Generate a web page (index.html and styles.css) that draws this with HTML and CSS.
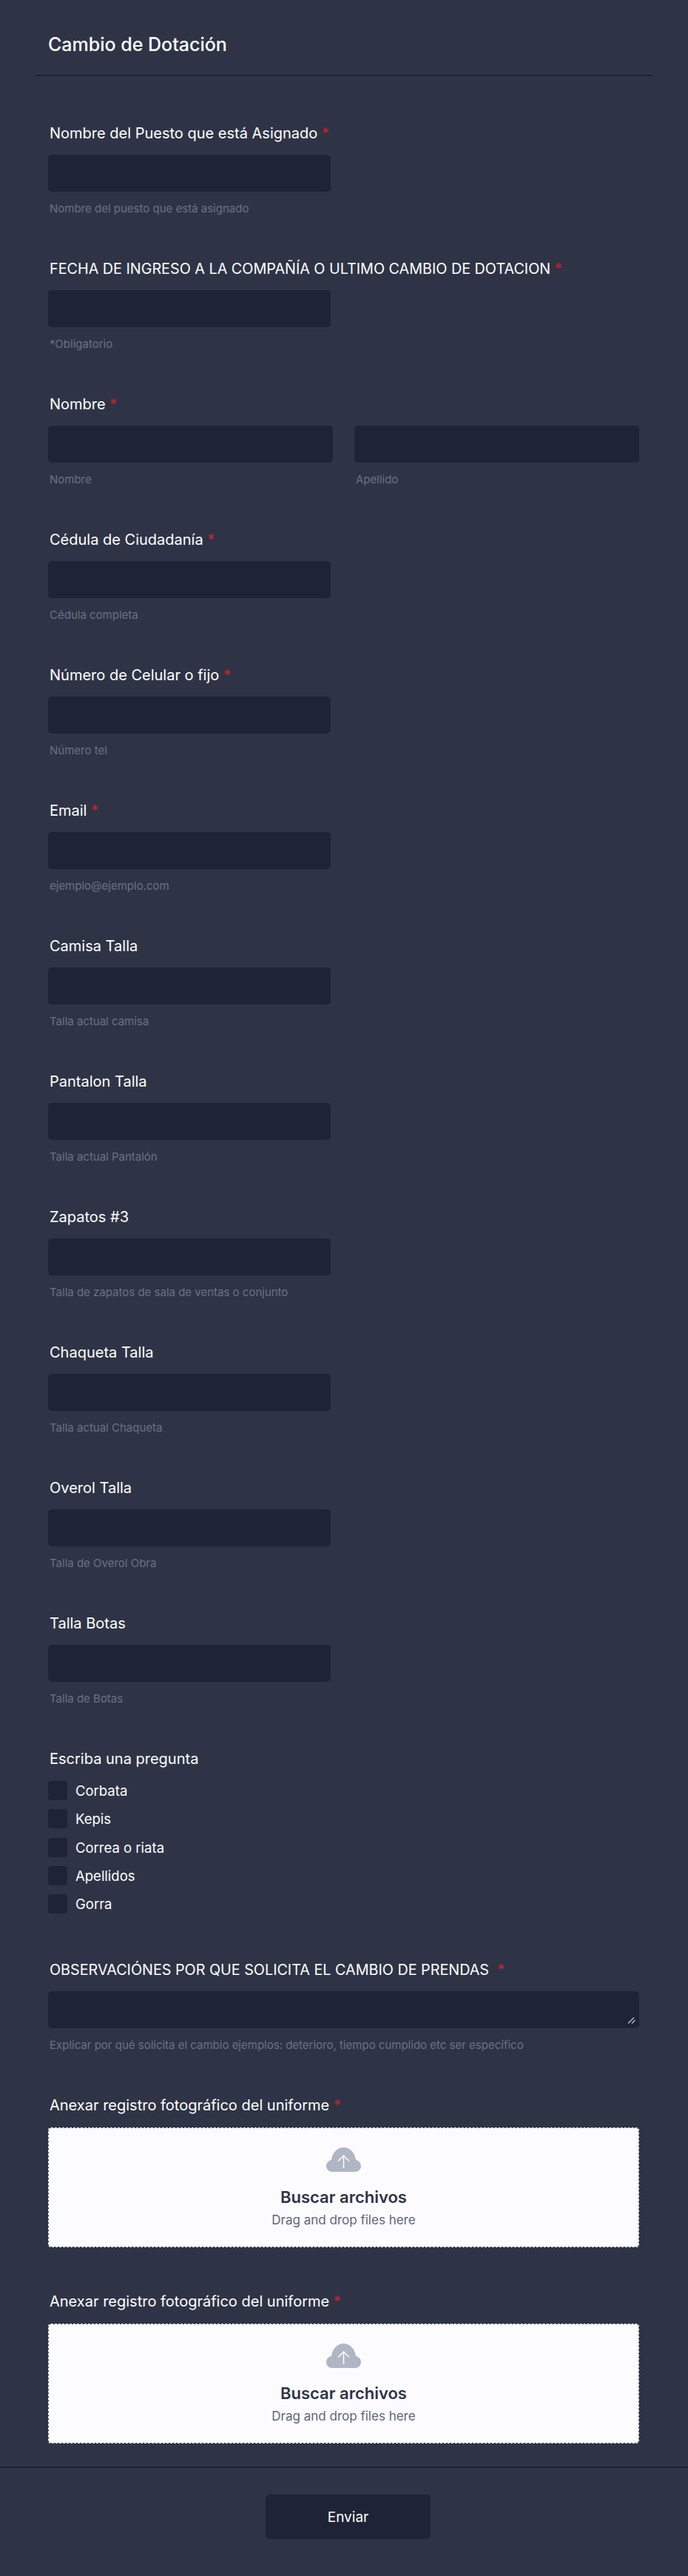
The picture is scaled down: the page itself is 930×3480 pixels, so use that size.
FILE: index.html
```html
<!DOCTYPE html>
<html lang="es">
<head>
  <meta charset="UTF-8" />
  <meta name="viewport" content="width=device-width, initial-scale=1.0">
  <title>Cambio de Dotación</title>
  <link rel="stylesheet" href="styles.css">
</head>
<body>

  <form class="form">
    <div class="header">
      <h1>Cambio de Dotación</h1>
    </div>

    <div class="fields">
      <div class="field">
        <label class="label">Nombre del Puesto que está Asignado <span class="req">*</span></label>
        <input class="input" type="text">
        <div class="hint">Nombre del puesto que está asignado</div>
      </div>

      <div class="field">
        <label class="label caps">FECHA DE INGRESO A LA COMPAÑÍA O ULTIMO CAMBIO DE DOTACION <span class="req">*</span></label>
        <input class="input" type="text">
        <div class="hint">*Obligatorio</div>
      </div>

      <div class="field">
        <label class="label">Nombre <span class="req">*</span></label>
        <div class="name-row">
          <div class="name-col">
            <input class="input wide" type="text">
            <div class="hint">Nombre</div>
          </div>
          <div class="name-col">
            <input class="input wide" type="text">
            <div class="hint">Apellido</div>
          </div>
        </div>
      </div>

      <div class="field">
        <label class="label">Cédula de Ciudadanía <span class="req">*</span></label>
        <input class="input" type="text">
        <div class="hint">Cédula completa</div>
      </div>

      <div class="field">
        <label class="label">Número de Celular o fijo <span class="req">*</span></label>
        <input class="input" type="text">
        <div class="hint">Número tel</div>
      </div>

      <div class="field">
        <label class="label">Email <span class="req">*</span></label>
        <input class="input" type="text">
        <div class="hint">ejemplo@ejemplo.com</div>
      </div>

      <div class="field">
        <label class="label">Camisa Talla</label>
        <input class="input" type="text">
        <div class="hint">Talla actual camisa</div>
      </div>

      <div class="field">
        <label class="label">Pantalon Talla</label>
        <input class="input" type="text">
        <div class="hint">Talla actual Pantalón</div>
      </div>

      <div class="field">
        <label class="label">Zapatos #3</label>
        <input class="input" type="text">
        <div class="hint">Talla de zapatos de sala de ventas o conjunto</div>
      </div>

      <div class="field">
        <label class="label">Chaqueta Talla</label>
        <input class="input" type="text">
        <div class="hint">Talla actual Chaqueta</div>
      </div>

      <div class="field">
        <label class="label">Overol Talla</label>
        <input class="input" type="text">
        <div class="hint">Talla de Overol Obra</div>
      </div>

      <div class="field">
        <label class="label">Talla Botas</label>
        <input class="input" type="text">
        <div class="hint">Talla de Botas</div>
      </div>

      <div class="field field-checks">
        <label class="label label-checks">Escriba una pregunta</label>
        <label class="check"><input type="checkbox">Corbata</label>
        <label class="check"><input type="checkbox">Kepis</label>
        <label class="check"><input type="checkbox">Correa o riata</label>
        <label class="check"><input type="checkbox">Apellidos</label>
        <label class="check"><input type="checkbox">Gorra</label>
      </div>

      <div class="field">
        <label class="label caps">OBSERVACIÓNES POR QUE SOLICITA EL CAMBIO DE PRENDAS &nbsp;<span class="req">*</span></label>
        <div class="textarea-wrap">
          <textarea class="input textarea"></textarea>
          <svg class="grip" viewBox="0 0 10 9" width="10" height="9">
            <path d="M0 8.500L8 .5M5 8.500L9.500 4" fill="none" stroke="#b8bcc8" stroke-width="1.300"/>
          </svg>
        </div>
        <div class="hint">Explicar por qué solicita el cambio ejemplos: deterioro, tiempo cumplido etc ser específico</div>
      </div>

      <div class="field field-upload">
        <label class="label">Anexar registro fotográfico del uniforme <span class="req">*</span></label>
        <div class="upload">
          <svg class="cloud" viewBox="0 0 47 33" width="47" height="33">
            <defs>
              <pattern id="dots1" width="3" height="3" patternUnits="userSpaceOnUse">
                <rect width="3" height="3" fill="#aeb3c2"/>
                <rect x="1" y="1" width="1" height="1" fill="#c6c9d4"/>
              </pattern>
            </defs>
            <path d="M8 33C3.5 33 0 29.5 0 25c0-4.2 3-7.6 7-8.1C8 7.500 15 0 23.500 0 32 0 39 7.500 40 16.900c4 .5 7 3.900 7 8.100 0 4.500-3.500 8-8 8z" fill="url(#dots1)"/>
            <path d="M23.500 28V11.500M16 18.500l7.500-7.500 7.500 7.500" fill="none" stroke="#fcfcff" stroke-width="1.500"/>
          </svg>
          <div class="upload-title">Buscar archivos</div>
          <div class="upload-sub">Drag and drop files here</div>
        </div>
      </div>

      <div class="field field-upload">
        <label class="label">Anexar registro fotográfico del uniforme <span class="req">*</span></label>
        <div class="upload">
          <svg class="cloud" viewBox="0 0 47 33" width="47" height="33">
            <path d="M8 33C3.5 33 0 29.5 0 25c0-4.2 3-7.6 7-8.1C8 7.500 15 0 23.500 0 32 0 39 7.500 40 16.900c4 .5 7 3.900 7 8.100 0 4.500-3.500 8-8 8z" fill="url(#dots1)"/>
            <path d="M23.500 28V11.500M16 18.500l7.500-7.500 7.500 7.500" fill="none" stroke="#fcfcff" stroke-width="1.500"/>
          </svg>
          <div class="upload-title">Buscar archivos</div>
          <div class="upload-sub">Drag and drop files here</div>
        </div>
      </div>
    </div>

    <div class="footer">
      <button class="submit" type="button">Enviar</button>
    </div>
  </form>

</body>
</html>
```
FILE: styles.css
```css
* {
  margin: 0;
  padding: 0;
  box-sizing: border-box;
}

body {
  font-family: 'Inter', sans-serif;
  background: #2e3446;
  color: #fff;
  min-height: 100vh;
}

/* Cabecera */
.header {
  margin: 0 48px;
  height: 103px;
  padding: 44px 17px 0;
  border-bottom: 2px solid #1e2436;
}

h1 {
  font-size: 25px;
  line-height: 32px;
  font-weight: 500;
}

.fields {
  padding: 63px 66px 0 65px;
}

.field {
  margin-bottom: 58px;
}

.label {
  display: block;
  font-size: 20px;
  line-height: 28px;
  font-weight: 400;
  padding-left: 2px;
  margin-bottom: 15px;
}

.label.caps {
  font-size: 19.750px;
}

.req {
  color: #c4242c;
}

.input {
  display: block;
  width: 382px;
  height: 50px;
  background: #1e2436;
  border: none;
  border-radius: 5px;
  color: #fff;
}

.input.wide {
  width: 100%;
}

.hint {
  font-size: 15px;
  line-height: 18px;
  color: #6c7183;
  margin-top: 14px;
  padding-left: 2px;
}

.name-row {
  display: flex;
  gap: 29px;
}

.name-col {
  width: 385px;
}

/* Casillas */
.field-checks {
  margin-bottom: 56px;
}

.label-checks {
  margin-bottom: 10px;
}

.check {
  display: flex;
  align-items: center;
  gap: 11px;
  height: 38.3px;
  font-size: 18.500px;
}

.check input {
  appearance: none;
  width: 26px;
  height: 26px;
  background: #1e2436;
  border-radius: 4px;
}

.textarea-wrap {
  position: relative;
  width: 799px;
}

.textarea {
  width: 100%;
  resize: none;
}

.grip {
  position: absolute;
  right: 5px;
  bottom: 6px;
  pointer-events: none;
}

/* Subir archivos */
.field-upload {
  margin-bottom: 59px;
}

.field-upload .label {
  margin-bottom: 16px;
}

.upload {
  width: 799px;
  height: 162px;
  padding-top: 26px;
  background: #fcfcff;
  background-clip: padding-box;
  border: 1px dashed #fff;
  border-radius: 4px;
  text-align: center;
  color: #2e3446;
}

.cloud {
  display: block;
  margin: 0 auto;
}

.upload-title {
  font-size: 22px;
  line-height: 28px;
  font-weight: 600;
  margin-top: 20px;
}

.upload-sub {
  font-size: 17px;
  line-height: 24px;
  color: #5f6579;
  margin-top: 5px;
}

/* Pie */
.footer {
  margin-top: -28px;
  border-top: 2px solid #1e2436;
  padding-top: 36px;
  display: flex;
  justify-content: center;
}

.submit {
  width: 223px;
  height: 60px;
  background: #1e2436;
  color: #fff;
  border: none;
  border-radius: 5px;
  font-family: inherit;
  font-size: 19px;
  margin-left: 11px;
}
```
